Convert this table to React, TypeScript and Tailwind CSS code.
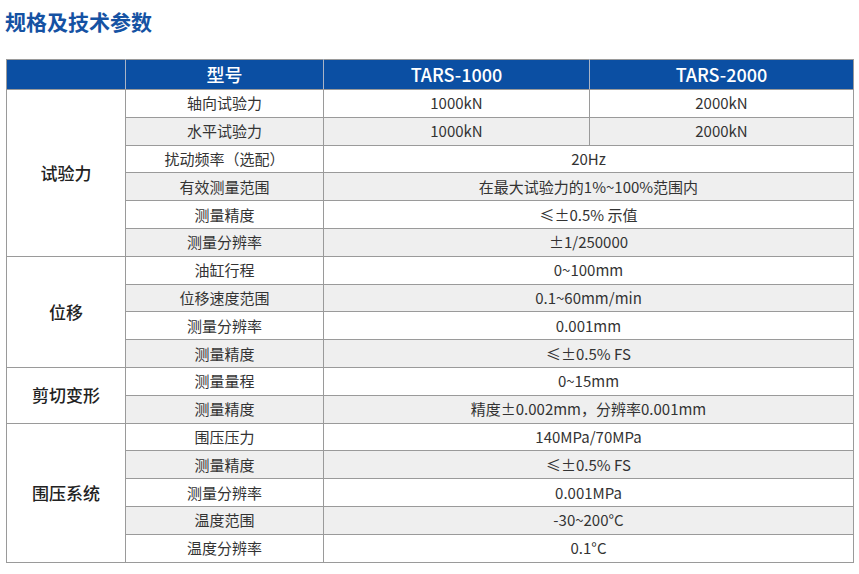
import React from "react";

type Row = { name: string; a: string; b?: string };
type Group = { label: string; rows: Row[] };

const groups: Group[] = [
  {
    label: "试验力",
    rows: [
      { name: "轴向试验力", a: "1000kN", b: "2000kN" },
      { name: "水平试验力", a: "1000kN", b: "2000kN" },
      { name: "扰动频率（选配）", a: "20Hz" },
      { name: "有效测量范围", a: "在最大试验力的1%~100%范围内" },
      { name: "测量精度", a: "≤±0.5% 示值" },
      { name: "测量分辨率", a: "±1/250000" },
    ],
  },
  {
    label: "位移",
    rows: [
      { name: "油缸行程", a: "0~100mm" },
      { name: "位移速度范围", a: "0.1~60mm/min" },
      { name: "测量分辨率", a: "0.001mm" },
      { name: "测量精度", a: "≤±0.5% FS" },
    ],
  },
  {
    label: "剪切变形",
    rows: [
      { name: "测量量程", a: "0~15mm" },
      { name: "测量精度", a: "精度±0.002mm，分辨率0.001mm" },
    ],
  },
  {
    label: "围压系统",
    rows: [
      { name: "围压压力", a: "140MPa/70MPa" },
      { name: "测量精度", a: "≤±0.5% FS" },
      { name: "测量分辨率", a: "0.001MPa" },
      { name: "温度范围", a: "-30~200°C" },
      { name: "温度分辨率", a: "0.1°C" },
    ],
  },
];

export default function App() {
  let idx = 0;
  return (
    <div
      className="w-[859px] h-[574px] bg-white pt-[6px]"
      style={{ fontFamily: '"Noto Sans CJK SC", "Noto Sans", sans-serif' }}
    >
      <h2 className="ml-[5px] text-[21px] leading-[30px] font-bold text-[#1552a3]">规格及技术参数</h2>
      <table className="ml-[6px] mt-[23px] w-[847px] table-fixed border-collapse text-[#333]">
        <colgroup>
          <col className="w-[119px]" />
          <col className="w-[198px]" />
          <col className="w-[266px]" />
          <col className="w-[264px]" />
        </colgroup>
        <thead>
          <tr className="bg-[#0b4fa3] text-white text-[18px] font-medium">
            <th className="h-[30px] p-0 border border-[#9a9a9a] border-r-[#aab4c6]"></th>
            <th className="h-[30px] p-0 font-medium border border-[#9a9a9a] border-r-[#aab4c6]">型号</th>
            <th className="h-[30px] p-0 font-medium border border-[#9a9a9a] border-r-[#aab4c6]">TARS-1000</th>
            <th className="h-[30px] p-0 font-medium border border-[#9a9a9a]">TARS-2000</th>
          </tr>
        </thead>
        <tbody className="text-[15px] leading-[20px]">
          {groups.map((g) =>
            g.rows.map((r, i) => {
              const shade = idx++ % 2 === 1 ? "bg-[#efefef]" : "bg-white";
              return (
                <tr key={g.label + i}>
                  {i === 0 && (
                    <td
                      rowSpan={g.rows.length}
                      className="p-0 bg-white text-center text-[17px] font-medium text-[#222] border border-[#9a9a9a]"
                    >
                      {g.label}
                    </td>
                  )}
                  <td className={`h-[27.8px] p-0 text-center border border-[#9a9a9a] ${shade}`}>{r.name}</td>
                  {r.b ? (
                    <>
                      <td className={`p-0 text-center border border-[#9a9a9a] ${shade}`}>{r.a}</td>
                      <td className={`p-0 text-center border border-[#9a9a9a] ${shade}`}>{r.b}</td>
                    </>
                  ) : (
                    <td colSpan={2} className={`p-0 text-center border border-[#9a9a9a] ${shade}`}>
                      {r.a}
                    </td>
                  )}
                </tr>
              );
            })
          )}
        </tbody>
      </table>
    </div>
  );
}
